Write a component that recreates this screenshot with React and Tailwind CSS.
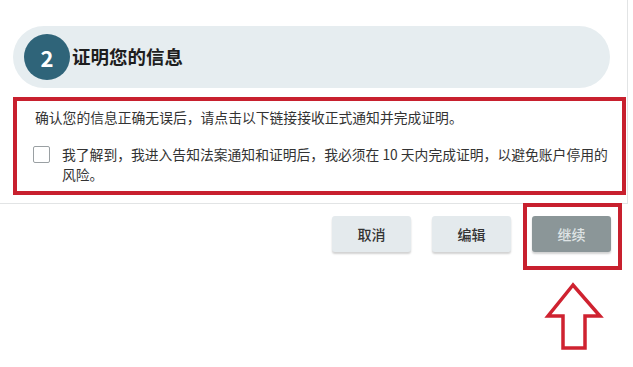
import React from 'react';

const FONT = { fontFamily: '"Noto Sans CJK SC", "Noto Sans", sans-serif' };

const ActionButton = ({ label, primary }) => (
    <button
        className={`w-[79px] h-[36px] rounded-[3px] text-[14px] font-medium shadow-[0_2px_2px_rgba(0,0,0,0.18)] ${primary ? 'bg-[#8b9698] text-[#dfe4e5]' : 'bg-[#e4eaed] text-[#333]'}`}
    >
        {label}
    </button>
);

export default function App() {
    return (
        <div className="relative w-[633px] h-[367px] bg-white overflow-hidden" style={FONT}>
            {/* step panel */}
            <div className="w-[628px] h-[204px] border-r border-b border-[#e2e4e5] pt-[26px]">
                <div className="ml-[13px] w-[597px] h-[62px] rounded-full bg-[#e6edf0] flex items-center">
                    <div className="ml-[11px] w-[46px] h-[46px] rounded-full bg-[#2f6479] text-white text-[22px] font-bold flex items-center justify-center">
                        2
                    </div>
                    <h2 className="ml-[2px] text-[18.5px] font-bold text-[#1e1e1e]">证明您的信息</h2>
                </div>

                <div className="mt-[9px] ml-[13px] w-[613px] h-[98px] border-4 border-[#c8202e] pt-[6px] pl-[16px] pr-[6px] text-[13.8px] leading-[20px] text-[#333]">
                    <p className="ml-[2px] whitespace-nowrap">确认您的信息正确无误后，请点击以下链接接收正式通知并完成证明。</p>
                    <div className="flex items-start mt-[17px]">
                        <span className="mt-[2px] w-[17px] h-[17px] shrink-0 border border-[#9aa0a3] rounded-[2px] bg-white"></span>
                        <p className="ml-[12px] whitespace-nowrap">
                            我了解到，我进入告知法案通知和证明后，我必须在 10 天内完成证明，以避免账户停用的
                            <br />
                            风险。
                        </p>
                    </div>
                </div>
            </div>

            {/* actions */}
            <div className="flex justify-end gap-[21px] pr-[22px] mt-[12px]">
                <ActionButton label="取消" />
                <ActionButton label="编辑" />
                <ActionButton label="继续" primary />
            </div>

            {/* annotation */}
            <div className="absolute left-[523px] top-[203px] w-[99px] h-[67px] border-4 border-[#c8202e]"></div>
            <svg className="absolute left-[544px] top-[281px]" width="60" height="72" viewBox="0 0 60 72">
                <polygon
                    points="29,4 4,35 19,35 19,67 41,67 41,35 56,35"
                    fill="white"
                    stroke="#cf2230"
                    strokeWidth="3.5"
                    strokeLinejoin="miter"
                />
            </svg>
        </div>
    );
}
